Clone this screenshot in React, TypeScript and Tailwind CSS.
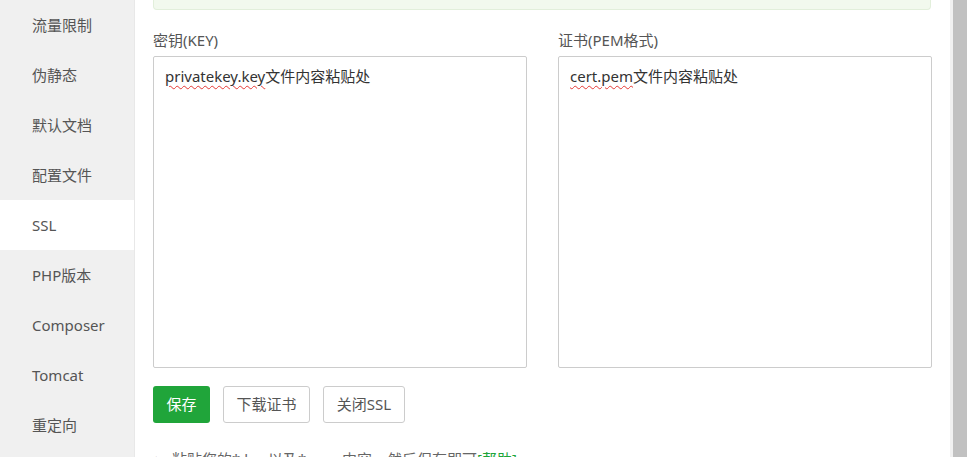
const menu = ["流量限制", "伪静态", "默认文档", "配置文件", "SSL", "PHP版本", "Composer", "Tomcat", "重定向"];

function PasteBox({ label, name }: { label: string; name: string }) {
  return (
    <div className="flex-1 flex flex-col">
      <div className="h-5 leading-5 text-[15px] text-[#555] mb-[6px]">{label}</div>
      <div className="h-[312px] border border-[#ccc] rounded-[2px] bg-white px-[11px] py-[9px] text-[15px] leading-5 text-[#333]">
        <span className="underline decoration-wavy decoration-[#e53935] decoration-1 underline-offset-[3px]">{name}</span>
        文件内容粘贴处
      </div>
    </div>
  );
}

export default function App() {
  return (
    <div
      className="flex w-[967px] h-[457px] overflow-hidden bg-white"
      style={{ fontFamily: '"Noto Sans", "Noto Sans CJK SC", sans-serif' }}
    >
      <div className="w-[135px] shrink-0 bg-[#f0f0f0] border-r border-[#e8e8e8] flex flex-col">
        {menu.map((m) => (
          <div
            key={m}
            className={`h-[50px] shrink-0 flex items-center pl-8 text-[15px] text-[#555] ${m === "SSL" ? "bg-white" : ""}`}
          >
            {m}
          </div>
        ))}
      </div>

      <div className="flex-1 flex flex-col px-[18px]">
        <div className="h-[10px] shrink-0 bg-[#f2f9ee] border border-t-0 border-[#e2efdb] rounded-b-[4px] mr-[1px]" />
        <div className="flex gap-[31px] mt-5">
          <PasteBox label="密钥(KEY)" name="privatekey.key" />
          <PasteBox label="证书(PEM格式)" name="cert.pem" />
        </div>
        <div className="flex gap-[13px] mt-[18px]">
          <button className="h-[37px] w-[57px] rounded-[3px] bg-[#20a53a] text-white text-[15px]">保存</button>
          <button className="h-[37px] w-[87px] rounded-[3px] border border-[#ccc] bg-white text-[#555] text-[15px]">下载证书</button>
          <button className="h-[37px] w-[82px] rounded-[3px] border border-[#ccc] bg-white text-[#555] text-[15px]">关闭SSL</button>
        </div>
        <div className="flex items-center mt-[26px] text-[15px] text-[#666] leading-5 shrink-0">
          <span className="w-[19px] pl-[1px] text-[12px]">•</span>
          <span>
            粘贴您的*.key以及*.pem内容，然后保存即可<span className="text-[#20a53a]">[帮助]</span>。
          </span>
        </div>
      </div>

      <div className="w-[17px] shrink-0 bg-[#f1f1f1] flex justify-end">
        <div className="w-[14px] bg-[#c1c1c1]" />
      </div>
    </div>
  );
}
